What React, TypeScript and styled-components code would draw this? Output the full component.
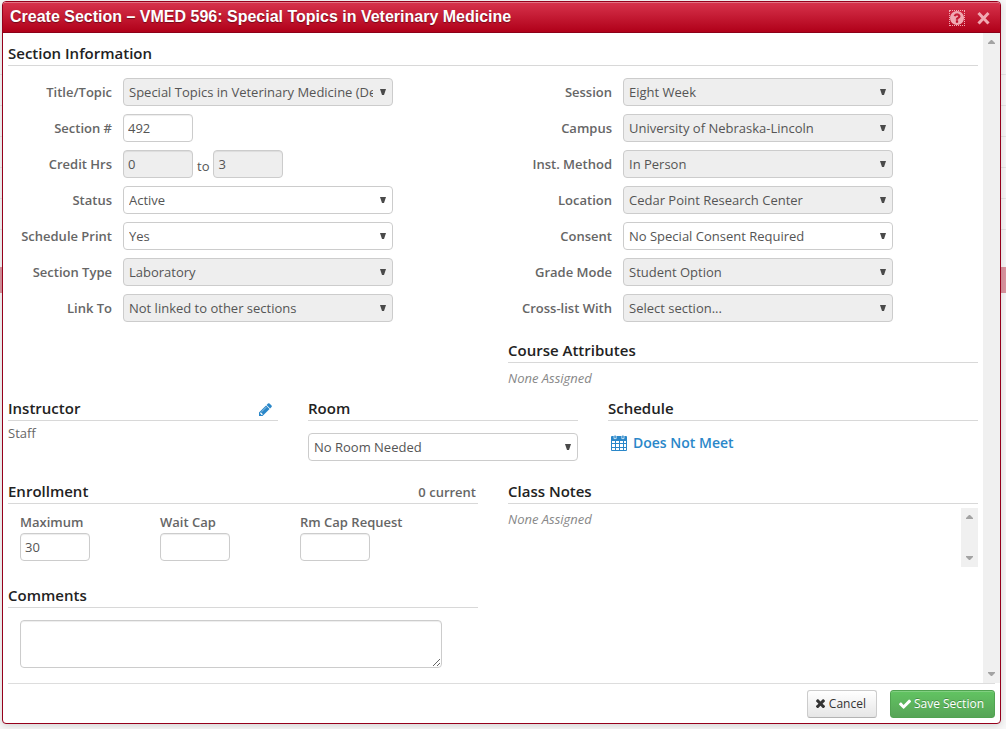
import React from "react";
import styled, { createGlobalStyle, css } from "styled-components";

const GlobalStyle = createGlobalStyle`
  * { box-sizing: border-box; }
  body {
    margin: 0;
    background: #f8f8f8;
    color: #555;
    font: 13px/20px "Open Sans", sans-serif;
  }
  button, input, select, textarea { font: inherit; color: inherit; margin: 0; }
`;

/* ---------- page and dimmed listing behind the dialog ---------- */

const Stage = styled.div`
  display: grid;
  min-height: 100vh;
  overflow: hidden;
  > * { grid-area: 1 / 1; min-width: 0; }
`;

const Listing = styled.div`
  padding-top: 44px;
`;

const ListingRow = styled.div`
  height: 31px;
  border-bottom: 1px solid #e6e6e6;
`;

const ListingBand = styled.div`
  height: 26px;
  margin-top: 37px;
  background: #dc95a0;
`;

/* ---------- dialog ---------- */

const Dialog = styled.section`
  position: relative;
  align-self: start;
  display: flex;
  flex-direction: column;
  margin: 1px 5px 5px 2px;
  background: #fff;
  border: 1px solid #96001b;
  border-radius: 4px;
  box-shadow: 0 2px 8px rgba(0, 0, 0, 0.15);
  overflow: hidden;
`;

const TitleBar = styled.header`
  display: flex;
  align-items: center;
  justify-content: space-between;
  height: 31px;
  padding: 0 9px 0 7px;
  background: linear-gradient(#d6324b, #b00019);
  border-top: 1px solid #e27384;
  border-bottom: 1px solid #8c0018;
  color: #fff;
`;

const Title = styled.h1`
  margin: 0;
  padding-bottom: 2px;
  font: bold 16px/26px "Liberation Sans", Arial, sans-serif;
  text-shadow: 0 1px 1px rgba(0, 0, 0, 0.4);
`;

const TitleTools = styled.div`
  display: flex;
  align-items: center;
  gap: 10px;
`;

const IconButton = styled.button<{ $focused?: boolean }>`
  display: flex;
  align-items: center;
  justify-content: center;
  width: 16px;
  height: 16px;
  padding: 0;
  border: 0;
  background: none;
  color: #f0a9b2;
  ${(p) => p.$focused && css`outline: 1px dotted #f0a9b2; outline-offset: -1px;`}
`;

const EditButton = styled(IconButton)`
  margin: 4px 5px 0 0;
  color: #2a87c9;
`;

const Main = styled.div`
  display: flex;
`;

const Content = styled.form`
  flex: 1;
  min-width: 0;
  padding: 9px 5px 15px;
`;

const Heading = styled.div`
  display: flex;
  justify-content: space-between;
  height: 24px;
  border-bottom: 1px solid #d8d8d8;
  line-height: 23px;
`;

const HeadingText = styled.h2`
  margin: 0;
  font-size: 15px;
  font-weight: 600;
  line-height: 23px;
  color: #222;
`;

const HeadingAside = styled.span`
  padding: 1px 2px 0 0;
  font-weight: 600;
  color: #666;
`;

const Halves = styled.div`
  display: grid;
  grid-template-columns: 1fr 1fr;
  column-gap: 30px;
`;

const Thirds = styled.div`
  display: grid;
  grid-template-columns: 27fr 27fr 37fr;
  column-gap: 30px;
  padding: 9px 0 19px;
`;

const Fields = styled.div`
  display: flex;
  flex-direction: column;
  gap: 8px;
  padding: 12px 0 17px;
`;

const FieldRow = styled.div`
  display: flex;
  gap: 11px;
  height: 28px;
`;

const Label = styled.label`
  font-weight: 600;
  line-height: 28px;
  color: #666;
`;

const SideLabel = styled(Label)`
  width: 104px;
  text-align: right;
`;

const control = css`
  height: 28px;
  border: 1px solid #ccc;
  border-radius: 4px;
  background: #fff;
  color: #555;
  opacity: 1;
  &:disabled { background: #eee; }
`;

const SelectBox = styled.span`
  position: relative;
  width: 270px;
  height: 28px;
`;

const SelectControl = styled.select`
  ${control}
  appearance: none;
  display: block;
  width: 100%;
  padding: 0 19px 0 5px;
`;

const SelectArrow = styled.svg`
  position: absolute;
  top: 11px;
  right: 7px;
  pointer-events: none;
`;

const SmallInput = styled.input`
  ${control}
  width: 70px;
  padding: 0 4px;
  box-shadow: inset 0 1px 1px rgba(0, 0, 0, 0.075);
`;

const Range = styled.div`
  display: flex;
  gap: 4px;
  line-height: 32px;
`;

const Note = styled.p`
  margin: 0;
  padding-top: 5px;
  font-style: italic;
  color: #888;
`;

const Person = styled.p`
  margin: 0;
  padding-top: 2px;
  color: #666;
`;

const RoomField = styled.div`
  display: flex;
  padding-top: 12px;
`;

const ScheduleLink = styled.a`
  display: inline-flex;
  align-items: center;
  gap: 6px;
  padding: 12px 3px 0;
  font-size: 14px;
  font-weight: 600;
  color: #2a87c9;
  text-decoration: none;
`;

const Caps = styled.div`
  display: grid;
  grid-template-columns: repeat(3, 140px);
  padding: 8px 12px 23px;
`;

const Cap = styled.div`
  display: flex;
  flex-direction: column;
  gap: 1px;
  ${Label} { line-height: 20px; }
`;

const Comments = styled.textarea`
  ${control}
  display: block;
  width: calc(100% - 48px);
  height: 48px;
  margin: 12px 12px 0;
  box-shadow: inset 0 1px 1px rgba(0, 0, 0, 0.075);
`;

const NotesPane = styled.div`
  display: flex;
  justify-content: space-between;
  height: 63px;
  > :last-child { margin-top: 4px; }
`;

const Track = styled.div`
  display: flex;
  flex-direction: column;
  align-items: center;
  justify-content: space-between;
  width: 17px;
  padding: 7px 0;
  background: #f0f0f0;
`;

const Footer = styled.footer`
  display: flex;
  justify-content: flex-end;
  gap: 13px;
  margin: 0 5px;
  padding: 6px 0 5px;
  border-top: 1px solid #ddd;
`;

const Button = styled.button<{ $primary?: boolean }>`
  display: flex;
  align-items: center;
  gap: 4px;
  height: 28px;
  padding: 0 10px 1px 8px;
  border: 1px solid #ccc;
  border-bottom-color: #b3b3b3;
  border-radius: 3px;
  background: linear-gradient(#fff, #e6e6e6);
  color: #333;
  font-size: 12px;
  white-space: nowrap;
  box-shadow: inset 0 1px 0 rgba(255, 255, 255, 0.2);
  ${(p) =>
    p.$primary &&
    css`
      gap: 3px;
      border-color: #51a351;
      background: linear-gradient(#62c462, #57a457);
      color: #fff;
      text-shadow: 0 -1px 0 rgba(0, 0, 0, 0.25);
    `}
`;

/* ---------- drawings ---------- */

const paths = {
  help: "M1024 1376v-192q0-14-9-23t-23-9h-192q-14 0-23 9t-9 23v192q0 14 9 23t23 9h192q14 0 23-9t9-23zm256-672q0-88-55.5-163t-138.5-116-170-41q-243 0-371 213-15 24 8 42l132 100q7 6 19 6 16 0 25-12 53-68 86-92 34-24 86-24 48 0 85.5 26t37.5 59q0 38-20 61t-68 45q-63 28-115.5 86.5t-52.5 125.5v36q0 14 9 23t23 9h192q14 0 23-9t9-23q0-19 21.5-49.5t54.5-49.5q32-18 49-28.5t46-35 44.5-48 28-60.5 12.5-81zm384 192q0 209-103 385.5t-279.5 279.5-385.5 103-385.5-103-279.5-279.5-103-385.5 103-385.5 279.5-279.5 385.5-103 385.5 103 279.5 279.5 103 385.5z",
  times:
    "M1490 1322q0 40-28 68l-136 136q-28 28-68 28t-68-28l-294-294-294 294q-28 28-68 28t-68-28l-136-136q-28-28-28-68t28-68l294-294-294-294q-28-28-28-68t28-68l136-136q28-28 68-28t68 28l294 294 294-294q28-28 68-28t68 28l136 136q28 28 28 68t-28 68l-294 294 294 294q28 28 28 68z",
  check:
    "M1671 566q0 40-28 68l-724 724-136 136q-28 28-68 28t-68-28l-136-136-362-362q-28-28-28-68t28-68l136-136q28-28 68-28t68 28l294 295 656-657q28-28 68-28t68 28l136 136q28 28 28 68z",
  pencil:
    "M491 1536l91-91-235-235-91 91v107h128v128h107zm523-928q0-22-22-22-10 0-17 7l-542 542q-7 7-7 17 0 22 22 22 10 0 17-7l542-542q7-7 7-17zm-54-192l416 416-832 832h-416v-416zm683 96q0 53-37 90l-166 166-416-416 166-165q36-38 90-38 53 0 91 38l235 234q37 39 37 91z",
};

const boxes = {
  help: "128 128 1536 1536",
  times: "302 348 1188 1188",
  check: "121 128 1550 1550",
  pencil: "128 128 1536 1536",
};

function Icon({ name, size }: { name: keyof typeof paths; size: number }) {
  return (
    <svg width={size} height={size} viewBox={boxes[name]} fill="currentColor" aria-hidden="true">
      <path d={paths[name]} />
    </svg>
  );
}

function CloseIcon() {
  return (
    <svg width="13" height="14" viewBox="0 0 13 14" aria-hidden="true">
      <path d="M1.5 2l10 10.5M11.5 2l-10 10.5" stroke="currentColor" strokeWidth="3" fill="none" />
    </svg>
  );
}

function CalendarIcon() {
  return (
    <svg width="16" height="16" viewBox="0 0 16 16" aria-hidden="true">
      <path
        fill="currentColor"
        fillRule="evenodd"
        d="M1 1h14a1 1 0 0 1 1 1v13a1 1 0 0 1-1 1H1a1 1 0 0 1-1-1V2a1 1 0 0 1 1-1zM1 6v2h3V6zM5 6v2h3V6zM9 6v2h3V6zM13 6v2h2V6zM1 9v3h3V9zM5 9v3h3V9zM9 9v3h3V9zM13 9v3h2V9zM1 13v2h3v-2zM5 13v2h3v-2zM9 13v2h3v-2zM13 13v2h2v-2z"
      />
      <path
        fill="currentColor"
        stroke="#fff"
        strokeWidth="0.7"
        d="M3 1.2a1 1 0 0 1 2.2 0v2.4H3zM10.8 1.2a1 1 0 0 1 2.2 0v2.4h-2.2z"
      />
    </svg>
  );
}

function ScrollTrack() {
  return (
    <Track aria-hidden="true">
      <svg width="7" height="4" viewBox="0 0 7 4">
        <path fill="#a3a3a3" d="M3 0h1L7 3v1H0V3z" />
      </svg>
      <svg width="7" height="4" viewBox="0 0 7 4">
        <path fill="#a3a3a3" d="M3 4h1L7 1V0H0v1z" />
      </svg>
    </Track>
  );
}

/* ---------- composed parts ---------- */

type SelectProps = { id: string; value: string; disabled?: boolean; label?: string };

function Select({ id, value, disabled, label }: SelectProps) {
  return (
    <SelectBox>
      <SelectControl id={id} disabled={disabled} aria-label={label}>
        <option>{value}</option>
      </SelectControl>
      <SelectArrow width="6" height="6" viewBox="0 0 6 6" aria-hidden="true">
        <path fill="#4a4a4a" d="M0 0h6L4 6H2z" />
      </SelectArrow>
    </SelectBox>
  );
}

function SelectField({ label, ...rest }: SelectProps & { label: string }) {
  return (
    <FieldRow>
      <SideLabel htmlFor={rest.id}>{label}</SideLabel>
      <Select {...rest} />
    </FieldRow>
  );
}

function SectionHeading({ text, children }: { text: string; children?: React.ReactNode }) {
  return (
    <Heading>
      <HeadingText>{text}</HeadingText>
      {children}
    </Heading>
  );
}

function CapField({ id, label, value }: { id: string; label: string; value?: string }) {
  return (
    <Cap>
      <Label htmlFor={id}>{label}</Label>
      <SmallInput id={id} defaultValue={value} />
    </Cap>
  );
}

export default function App() {
  return (
    <>
      <GlobalStyle />
      <Stage>
        <Listing aria-hidden="true">
          {[0, 1, 2, 3, 4, 5].map((row) => (
            <ListingRow key={row} />
          ))}
          <ListingBand />
        </Listing>

        <Dialog role="dialog" aria-labelledby="dialog-title">
          <TitleBar>
            <Title id="dialog-title">Create Section – VMED 596: Special Topics in Veterinary Medicine</Title>
            <TitleTools>
              <IconButton type="button" aria-label="Help" $focused>
                <Icon name="help" size={14} />
              </IconButton>
              <IconButton type="button" aria-label="Close">
                <CloseIcon />
              </IconButton>
            </TitleTools>
          </TitleBar>

          <Main>
            <Content id="section-form">
              <SectionHeading text="Section Information" />
              <Halves>
                <Fields>
                  <SelectField id="topic" label="Title/Topic" value="Special Topics in Veterinary Medicine (Default)" disabled />
                  <FieldRow>
                    <SideLabel htmlFor="number">Section #</SideLabel>
                    <SmallInput id="number" defaultValue="492" />
                  </FieldRow>
                  <FieldRow>
                    <SideLabel htmlFor="credit-min">Credit Hrs</SideLabel>
                    <Range>
                      <SmallInput id="credit-min" defaultValue="0" disabled />
                      <span>to</span>
                      <SmallInput aria-label="Maximum credit hours" defaultValue="3" disabled />
                    </Range>
                  </FieldRow>
                  <SelectField id="status" label="Status" value="Active" />
                  <SelectField id="print" label="Schedule Print" value="Yes" />
                  <SelectField id="type" label="Section Type" value="Laboratory" disabled />
                  <SelectField id="link" label="Link To" value="Not linked to other sections" disabled />
                </Fields>
                <div>
                  <Fields>
                    <SelectField id="session" label="Session" value="Eight Week" disabled />
                    <SelectField id="campus" label="Campus" value="University of Nebraska-Lincoln" disabled />
                    <SelectField id="method" label="Inst. Method" value="In Person" disabled />
                    <SelectField id="location" label="Location" value="Cedar Point Research Center" disabled />
                    <SelectField id="consent" label="Consent" value="No Special Consent Required" />
                    <SelectField id="grade" label="Grade Mode" value="Student Option" disabled />
                    <SelectField id="crosslist" label="Cross-list With" value="Select section..." disabled />
                  </Fields>
                  <SectionHeading text="Course Attributes" />
                  <Note>None Assigned</Note>
                </div>
              </Halves>

              <Thirds>
                <div>
                  <SectionHeading text="Instructor">
                    <EditButton type="button" aria-label="Edit instructor">
                      <Icon name="pencil" size={13} />
                    </EditButton>
                  </SectionHeading>
                  <Person>Staff</Person>
                </div>
                <div>
                  <SectionHeading text="Room" />
                  <RoomField>
                    <Select id="room" label="Room" value="No Room Needed" />
                  </RoomField>
                </div>
                <div>
                  <SectionHeading text="Schedule" />
                  <ScheduleLink href="#schedule">
                    <CalendarIcon />
                    Does Not Meet
                  </ScheduleLink>
                </div>
              </Thirds>

              <Halves>
                <div>
                  <SectionHeading text="Enrollment">
                    <HeadingAside>0 current</HeadingAside>
                  </SectionHeading>
                  <Caps>
                    <CapField id="max" label="Maximum" value="30" />
                    <CapField id="wait" label="Wait Cap" />
                    <CapField id="room-cap" label="Rm Cap Request" />
                  </Caps>
                  <SectionHeading text="Comments" />
                  <Comments aria-label="Comments" />
                </div>
                <div>
                  <SectionHeading text="Class Notes" />
                  <NotesPane>
                    <Note>None Assigned</Note>
                    <ScrollTrack />
                  </NotesPane>
                </div>
              </Halves>
            </Content>
            <ScrollTrack />
          </Main>

          <Footer>
            <Button type="button">
              <Icon name="times" size={9} />
              Cancel
            </Button>
            <Button type="submit" form="section-form" $primary>
              <Icon name="check" size={12} />
              Save Section
            </Button>
          </Footer>
        </Dialog>
      </Stage>
    </>
  );
}
